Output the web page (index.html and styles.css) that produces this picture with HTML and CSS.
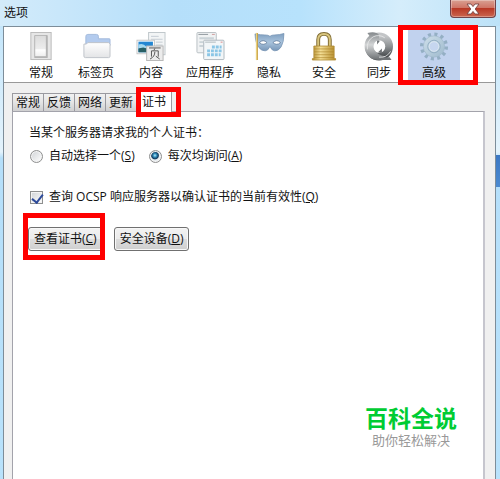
FILE: index.html
```
<!DOCTYPE html>
<html lang="zh-CN">
<head>
	<meta charset="utf-8">
	<title>选项</title>
	<link rel="stylesheet" href="styles.css">
</head>
<body>
<div class="window">
	<div class="titlebar">
		<h1>选项</h1>
		<button class="close" type="button" aria-label="关闭">
			<svg width="14" height="12" viewBox="0 0 14 12"><path d="M1 1h4l2 2.600L9 1h4L9.200 6 13 11H9L7 8.400 5 11H1L4.800 6z" fill="#fff" stroke="#6b3a3a" stroke-width=".8"/></svg>
		</button>
	</div>
	<div class="client">
		<div class="toolbar">
			<button class="tool" type="button">
				<svg width="30" height="30" viewBox="0 0 30 30">
					<defs><linearGradient id="sw" x2="0" y2="1"><stop offset="0" stop-color="#dcdcdc"/><stop offset=".65" stop-color="#ededed"/><stop offset=".68" stop-color="#fff"/><stop offset="1" stop-color="#eee"/></linearGradient></defs>
					<rect x="4.500" y=".5" width="21" height="28" fill="#e6e6e6" stroke="#bbb"/>
					<rect x="8" y="3" width="14" height="24" rx="1" fill="#b4b4b4"/>
					<rect x="9" y="4" width="11" height="21" fill="url(#sw)"/>
				</svg>
				<span>常规</span>
			</button>
			<button class="tool" type="button">
				<svg width="30" height="30" viewBox="0 0 30 30">
					<defs><linearGradient id="fd" x2="0" y2="1"><stop offset="0" stop-color="#fff"/><stop offset="1" stop-color="#e3e4e6"/></linearGradient></defs>
					<path d="M4.500 14V4.500q0-2 2-2h9q2 0 2 2V7H29q.5 0 .5 1v6z" fill="#b3cbee" stroke="#a4bbdc"/>
					<path d="M2.500 12.500H5L6.500 11H28l1.500 1.500V25q0 1.500-1.500 1.500H4Q2.500 26.500 2.500 25z" fill="url(#fd)" stroke="#bfc3c9"/>
				</svg>
				<span>标签页</span>
			</button>
			<button class="tool" type="button">
				<svg width="30" height="30" viewBox="0 0 30 30">
					<rect x="12.500" y=".5" width="17" height="23" fill="#f3f5f6" stroke="#bfc7cb"/>
					<path d="M15 4.500h8M15 7.500h12M20 10.500h7M20 13.500h7" stroke="#c4ccd2"/>
					<rect x=".5" y="8.500" width="18" height="14" fill="#fff" stroke="#c5c5c5"/>
					<path d="M2 10h15v11H2z" fill="#2386d2"/><path d="M2 13q5-2 8 2t7-1v3H2z" fill="#a4d8ef"/><path d="M2 17l5-1 10 3v2H2z" fill="#285f64"/>
					<rect x="10.500" y="14.500" width="17" height="15" fill="#ececec" stroke="#b7b7b7"/>
					<path d="M13 16.500h12M19 17l-1 2M15.500 25.500V19.500h7v6M19 20.500q0 5-5 7.500M20 25l4 3" fill="none" stroke="#555"/>
				</svg>
				<span>内容</span>
			</button>
			<button class="tool" type="button">
				<svg width="30" height="30" viewBox="0 0 30 30">
					<rect x="1.500" y=".5" width="20" height="21" rx="1" fill="#f0f2f3" stroke="#b9c0c4"/>
					<path d="M3 2.500h10" stroke="#8f969b"/><path d="M17 2.500h3" stroke="#cf9b9b"/>
					<path d="M4 6.500h15M4 10.500h4M4 14.500h4" stroke="#cad3d8" stroke-width="2"/>
					<rect x="8.500" y="8.500" width="21" height="20" rx="1" fill="#f2f6f8" stroke="#afb9bf"/>
					<path d="M10 10.500h11" stroke="#aeb8be"/><path d="M26 10.500h2" stroke="#d88"/>
					<path d="M17 15.500h10M12 19.500h15M12 23.500h14" stroke="#8ac6e6" stroke-width="3" stroke-dasharray="3 1"/>
				</svg>
				<span>应用程序</span>
			</button>
			<button class="tool" type="button">
				<svg width="32" height="30" viewBox="0 0 32 30">
					<defs><linearGradient id="mk" x2="0" y2="1"><stop offset="0" stop-color="#7f9fc0"/><stop offset=".5" stop-color="#a9c3dc"/><stop offset="1" stop-color="#7897b8"/></linearGradient></defs>
					<path d="M1.500 2q6 1 10 1 4 0 5.500 1.500Q18.500 3 22 3q5 0 9.500-1.500 0 9-3 14Q26 19.500 22 19.500q-3 0-5-4.500-2 4.500-5 4.500-4 0-7-4Q2 11 1.500 2z" fill="url(#mk)" stroke="#7290b0" stroke-width=".7"/>
					<path d="M6 11q4-4 8 0-4 3.500-8 0zM20 11q4-4 8 0-4 3.500-8 0z" fill="#fff" stroke="#5c7898" stroke-width=".8"/>
					<path d="M3.500 1v28" stroke="#c8a040" stroke-width="2"/><path d="M3 1v28" stroke="#ecd484"/>
				</svg>
				<span>隐私</span>
			</button>
			<button class="tool" type="button">
				<svg width="30" height="30" viewBox="0 0 30 30">
					<defs><linearGradient id="lk" x2="1" y2="0"><stop offset="0" stop-color="#b48e30"/><stop offset=".35" stop-color="#f4df96"/><stop offset="1" stop-color="#b58c2a"/></linearGradient></defs>
					<path d="M9 16V8q0-6 6-6t6 6v8" fill="none" stroke="#806c34" stroke-width="4"/>
					<path d="M9 16V8q0-6 6-6t6 6v8" fill="none" stroke="#d8c57e" stroke-width="2"/>
					<path d="M4.500 14.500h21v13H27v1.500H3v-1.500h1.500z" fill="url(#lk)" stroke="#ae8830" stroke-width=".8"/>
					<path d="M5 17.500h20M5 20.500h20M5 23.500h20M5 26.500h20" stroke="#a57b20" opacity=".55"/>
				</svg>
				<span>安全</span>
			</button>
			<button class="tool" type="button">
				<svg width="30" height="30" viewBox="0 0 30 30">
					<defs>
						<linearGradient id="sa" x2="0" y2="1"><stop offset="0" stop-color="#85898c"/><stop offset=".45" stop-color="#d3d5d6"/><stop offset="1" stop-color="#6a6e71"/></linearGradient>
						<linearGradient id="sb" x2="0" y2="1"><stop offset="0" stop-color="#c3c5c7"/><stop offset=".5" stop-color="#8d9193"/><stop offset="1" stop-color="#45494c"/></linearGradient>
					</defs>
					<circle cx="15" cy="15" r="10.500" fill="none" stroke="url(#sb)" stroke-width="8"/>
					<path d="M16 29Q5 30 1 20-2 10 5 4L3 1q9-2 12 2v8l-3-2q-4 4-2 9 3 6 12 7-2 3-6 4z" fill="url(#sa)"/>
					<path d="M17 26v3h11l-2-3M13 9v4l3-4M18 17v5l-4-1z" fill="#6f7376"/>
					<path d="M3 18Q2 9 9 5q6-3 12 1M27 20q-4 7-12 6" fill="none" stroke="#eceded" opacity=".8"/>
				</svg>
				<span>同步</span>
			</button>
			<button class="tool selected marked" type="button">
				<svg width="30" height="30" viewBox="0 0 30 30">
					<defs><linearGradient id="gr" x2="1" y2="1"><stop offset="0" stop-color="#c8dae6"/><stop offset="1" stop-color="#a5bfd1"/></linearGradient></defs>
					<circle cx="15" cy="15" r="12.500" fill="none" stroke="#94afc4" stroke-width="4" stroke-dasharray="3.100 3.445"/>
					<circle cx="15" cy="15" r="8" fill="none" stroke="url(#gr)" stroke-width="6"/>
					<circle cx="15" cy="15" r="11" fill="none" stroke="#9db7ca" stroke-width=".6"/>
					<circle cx="15" cy="15" r="6.500" fill="none" stroke="#94afc4" stroke-width="1"/>
					<circle cx="15" cy="15" r="5" fill="#c6d6ef" stroke="#dce7f0"/>
				</svg>
				<span>高级</span>
			</button>
		</div>
		<div class="content">
			<div class="tabs" role="tablist">
				<button type="button" role="tab">常规</button>
				<button type="button" role="tab">反馈</button>
				<button type="button" role="tab">网络</button>
				<button type="button" role="tab">更新</button>
				<button class="active marked" type="button" role="tab" aria-selected="true">证书</button>
			</div>
			<form class="panel" role="tabpanel">
				<p>当某个服务器请求我的个人证书：</p>
				<div class="row">
					<label><input type="radio" name="cert" accesskey="s"><span>自动选择一个(<u>S</u>)</span></label>
					<label><input type="radio" name="cert" accesskey="a" checked><span>每次均询问(<u>A</u>)</span></label>
				</div>
				<div class="row ocsp">
					<label><input type="checkbox" accesskey="q" checked><span>查询 OCSP 响应服务器以确认证书的当前有效性(<u>Q</u>)</span></label>
				</div>
				<div class="buttons">
					<button class="marked" type="button" accesskey="c">查看证书(<u>C</u>)</button>
					<button type="button" accesskey="d">安全设备(<u>D</u>)</button>
				</div>
				<div class="brand">
					<strong>百科全说</strong>
					<span>助你轻松解决</span>
				</div>
			</form>
		</div>
	</div>
</div>
</body>
</html>
```
FILE: styles.css
```
*{
	box-sizing: border-box;
}
body, h1, p{
	margin: 0;
}
body, button, input{
	font-family: "Open Sans", "Noto Sans CJK SC", sans-serif;
	font-size: 12px;
	line-height: 16px;
	color: #111;
}
button{
	margin: 0;
	padding: 0;
	border: none;
	background: none;
	white-space: nowrap;
}
svg{
	display: block;
}
.window{
	min-height: 100vh;
	padding: 0 4px 0 3px;
	display: flex;
	flex-direction: column;
	background:
		linear-gradient(#3c78c4, #4c8ad0) right 155px / 4px 32px no-repeat,
		linear-gradient(#c4e6fb 0, #e4f3fc 126px, #b5dffa 132px, #b9e2fb 100%) 0 26px no-repeat,
		linear-gradient(90deg, #d3ebfa 0, #b5dffa 35%, #b7e2fc 60%, #d5edfb 80%, #bce2f8 100%);
}
/*标题栏*/
.titlebar{
	height: 26px;
	display: flex;
	justify-content: space-between;
}
.titlebar h1{
	padding-left: 1px;
	font-size: 12px;
	font-weight: normal;
	line-height: 26px;
}
.close{
	width: 46px;
	height: 18px;
	display: flex;
	align-items: center;
	justify-content: center;
	border: 1px solid #70434a;
	border-top: none;
	border-radius: 0 0 4px 4px;
	background: linear-gradient(#d9a092 0, #cf7566 45%, #b83825 50%, #cb6650 100%);
	box-shadow: inset 0 0 0 1px rgba(255, 255, 255, .3);
}
.client{
	flex: 1;
	display: flex;
	flex-direction: column;
	border: 1px solid #7d8d99;
	border-bottom: none;
	background: #f0f0f0;
}
/*工具栏*/
.toolbar{
	height: 56px;
	padding: 2px 11px 0;
	display: flex;
	align-items: flex-start;
	gap: 3px;
	border-bottom: 1px solid #999;
	background: #fff;
}
.tool{
	min-width: 52px;
	height: 52px;
	padding: 3px 6px 0;
	display: flex;
	flex-direction: column;
	align-items: center;
	gap: 4px;
}
.tool.selected{
	background: #c1d2ee;
}
/*红框标注*/
.marked{
	position: relative;
}
.marked:after{
	content: "";
	position: absolute;
	z-index: 1;
	border: 5px solid #f00;
	pointer-events: none;
}
.tool.marked:after{
	inset: -4px -18px -4px -10px;
}
.tabs .marked:after{
	inset: -5px -10px -5px -1px;
}
.buttons .marked:after{
	inset: -15px -3px -10px -6px;
}
/*选项卡*/
.content{
	flex: 1;
	padding: 8px 10px 0 8px;
	display: flex;
	flex-direction: column;
}
.tabs{
	display: flex;
	align-items: flex-end;
}
.tabs button{
	width: 31px;
	height: 18px;
	border: 1px solid #9a9aa0;
	border-width: 1px 1px 0 0;
	background: linear-gradient(#f1f1f1, #e6e6e6 45%, #cfcfd0);
}
.tabs button:first-child{
	width: 32px;
	border-left-width: 1px;
}
.tabs .active{
	width: 35px;
	height: 21px;
	margin-bottom: -1px;
	background: #fff;
}
.panel{
	flex: 1;
	padding: 13px 16px 30px 15px;
	display: flex;
	flex-direction: column;
	border: 1px solid #a3a3ab;
	border-width: 1px 2px 0 1px;
	border-right-color: #c6c6ce;
	background: #fff;
}
.row{
	margin-top: 7px;
	display: flex;
	gap: 12px;
}
.row label{
	display: flex;
	align-items: center;
	gap: 6px;
	padding-left: 2px;
}
.row input{
	appearance: none;
	width: 13px;
	height: 13px;
	margin: 0;
	border: 1px solid #8e8f8f;
	background: linear-gradient(135deg, #d0d3d6, #fff);
	box-shadow: inset 0 0 0 1px #f4f4f4;
}
.row input[type=radio]{
	border-radius: 50%;
}
.row input[type=radio]:checked{
	background: radial-gradient(circle at 45% 40%, #b4eafa 0, #2f8cba 20%, #12395c 38%, #e8edf0 50%);
}
.row input[type=checkbox]:checked:after{
	content: "";
	display: block;
	width: 5px;
	height: 9px;
	margin-left: 3px;
	border: solid #2d4a9a;
	border-width: 0 2px 2px 0;
	transform: rotate(38deg);
}
.ocsp{
	margin-top: 25px;
}
.panel p{
	padding-left: 1px;
}
.buttons{
	margin-top: 22px;
	display: flex;
	gap: 11px;
}
.buttons button{
	height: 24px;
	padding: 0 5px;
	border: 1px solid #707070;
	border-radius: 3px;
	background: linear-gradient(#f2f2f2, #ebebeb 49%, #dddddd 50%, #cfcfcf);
	box-shadow: inset 0 0 0 1px #f8f8f8;
}
/*右下角标识*/
.brand{
	margin: auto 10px 0 0;
	align-self: flex-end;
	display: flex;
	flex-direction: column;
	align-items: center;
	color: #999;
	font-size: 13px;
	line-height: 18px;
}
.brand strong{
	font-size: 23px;
	line-height: 26px;
	color: #0c3;
}
```
